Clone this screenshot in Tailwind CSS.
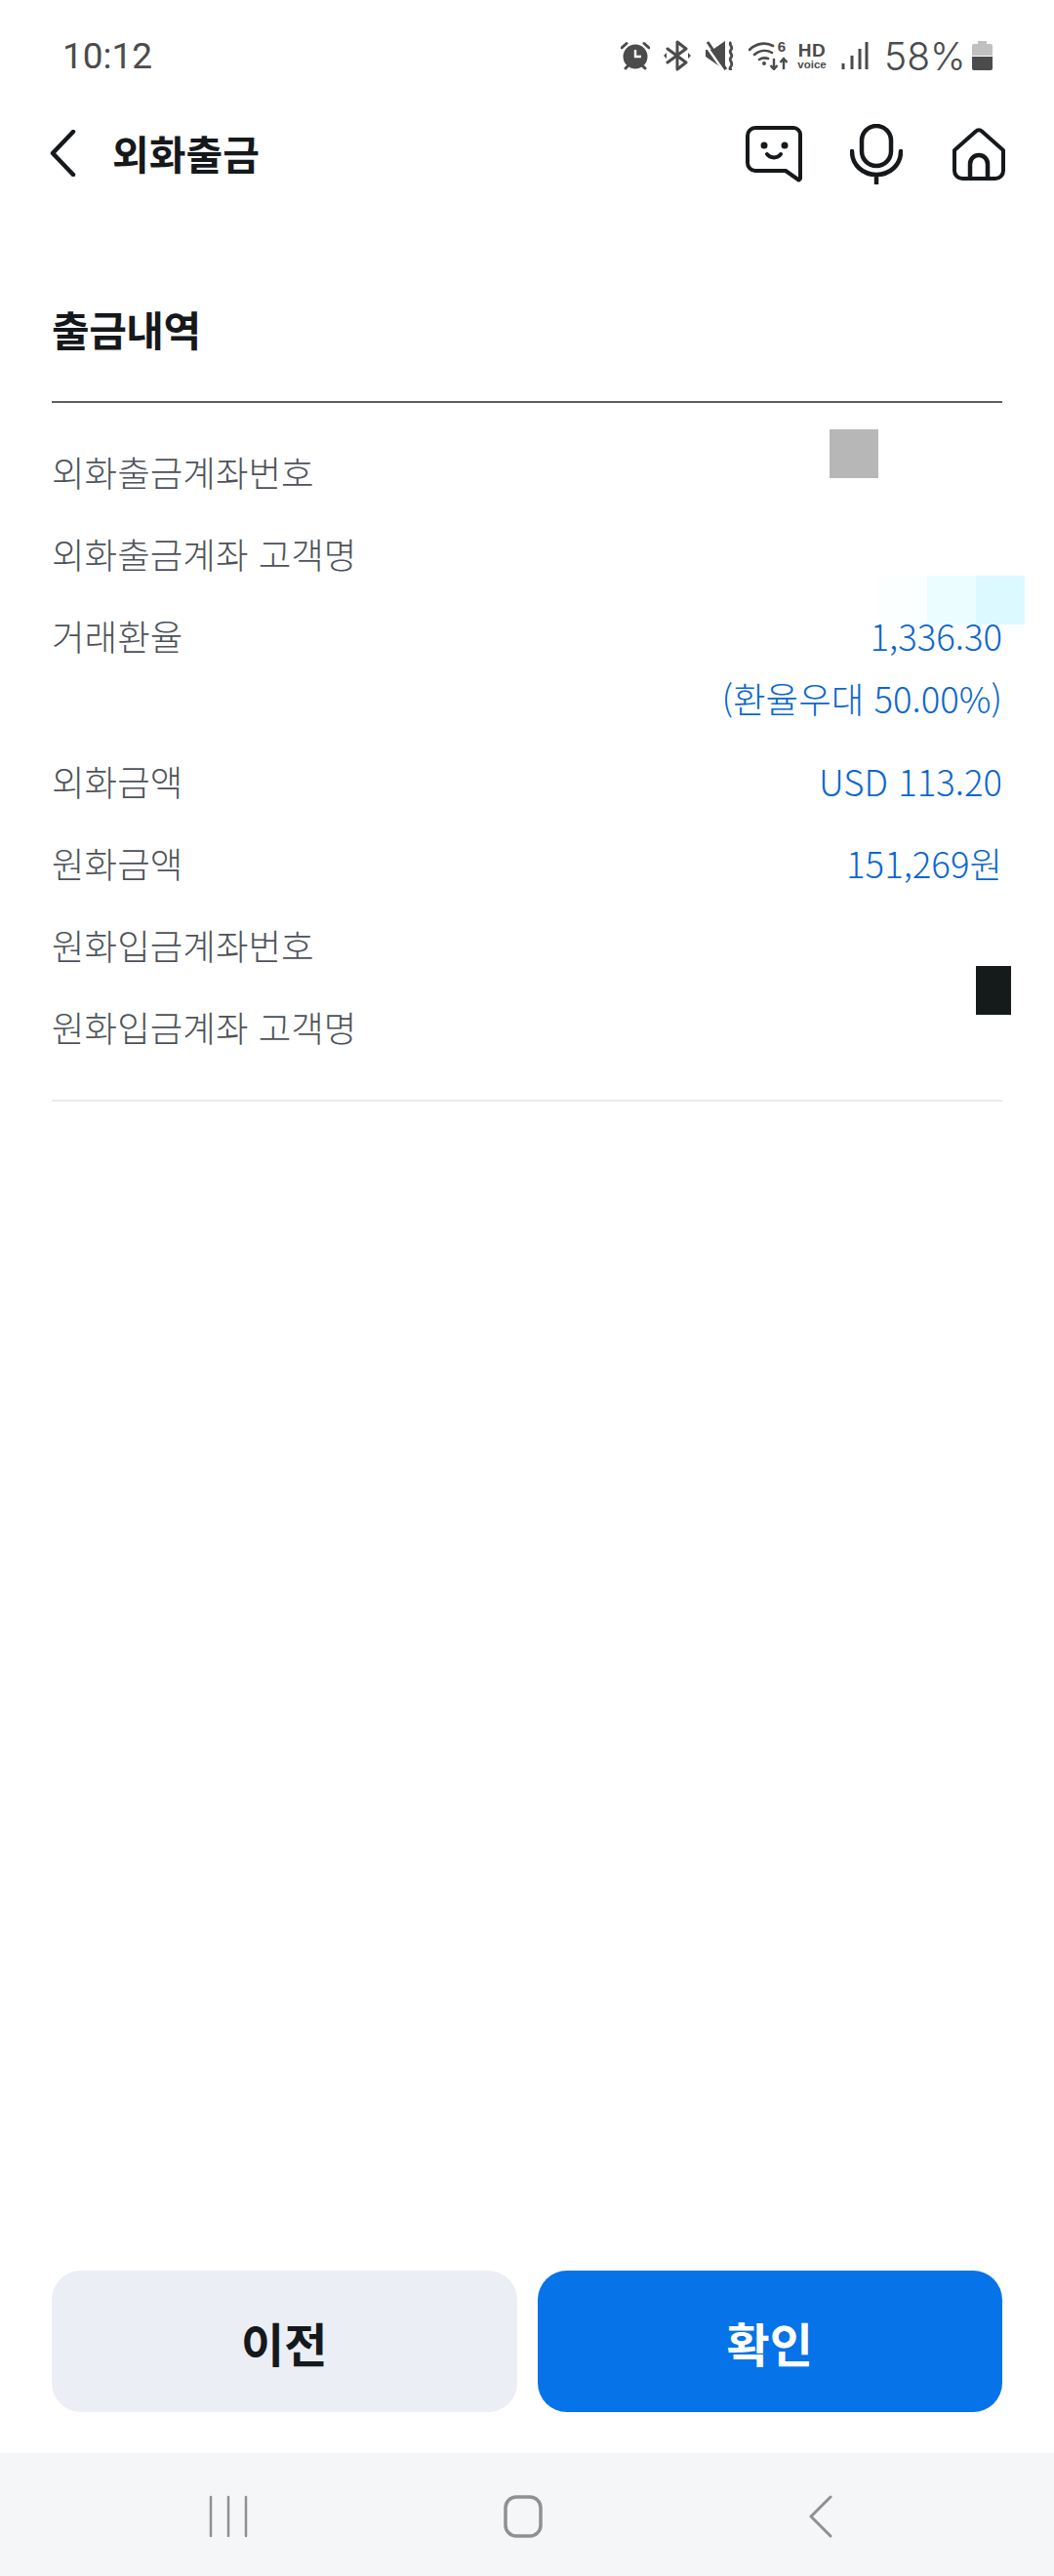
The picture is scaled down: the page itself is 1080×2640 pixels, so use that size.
<!doctype html>
<html lang="ko">
<head>
<meta charset="utf-8">
<script src="https://cdn.jsdelivr.net/npm/@tailwindcss/browser@4"></script>
</head>
<body class="bg-white">
<div class="relative w-[1080px] h-[2640px] flex flex-col bg-white overflow-hidden font-['Noto_Sans_CJK_KR','Noto_Sans',sans-serif]">

  <!-- status bar -->
  <div class="h-[114px] shrink-0 flex items-center justify-between pl-[64px] pr-[63px] text-[#4b4b4b]">
    <span class="font-['Roboto',sans-serif] text-[37px] leading-none">10:12</span>
    <div class="flex items-center h-[34px]">
      <svg class="w-[30px] h-[30px] mr-[14px]" viewBox="0 0 30 30"><circle cx="15" cy="16" r="12.500" fill="#4b4b4b"/><path d="M15 9v7h6" fill="none" stroke="#fff" stroke-width="2.4"/><path d="M1 7 6 2.500M29 7 24 2.500M5 28l2.500-2.500M25 28l-2.500-2.500" stroke="#4b4b4b" stroke-width="3" stroke-linecap="round"/></svg>
      <svg class="w-[28px] h-[32px] mr-[15px]" viewBox="0 0 28 32"><path d="M4 9 23 23 14 30V2l9 7L4 23" fill="none" stroke="#4b4b4b" stroke-width="3" stroke-linejoin="round" stroke-linecap="round"/><path d="M0 16l3-3v6zM28 16l-3-3v6z" fill="#4b4b4b"/></svg>
      <svg class="w-[30px] h-[30px] mr-[14px]" viewBox="0 0 30 30"><path d="M0 9h7L20 0v30L0 16z" fill="#4b4b4b"/><path d="M-1 3 18 30" stroke="#fff" stroke-width="2.400"/><path d="M2 1 21 29" stroke="#4b4b4b" stroke-width="3"/><path d="M26 1c-3 3 3 5 0 8s3 5 0 8 3 5 0 9 1 3 1 3" fill="none" stroke="#4b4b4b" stroke-width="2.800"/></svg>
      <div class="relative w-[41px] h-[30px] mr-[7px]">
        <svg class="absolute left-0 top-0 w-[41px] h-[30px]" viewBox="0 0 41 30"><path d="M1 9C8 2 18 1 25 5M6 14c6-5 13-5 18-2M11 19c3-2 6-2 9-1" fill="none" stroke="#4b4b4b" stroke-width="2.600" stroke-linecap="round"/><circle cx="16" cy="23" r="2" fill="#4b4b4b"/><path d="M26 18v11M22.500 25l3.500 4 3.500-4M36 29V18M32.500 22l3.500-4 3.500 4" fill="none" stroke="#4b4b4b" stroke-width="2.400"/></svg>
        <span class="absolute right-[3px] top-[-3px] font-['Liberation_Sans',sans-serif] font-bold text-[15px] leading-[18px]">6</span>
      </div>
      <div class="w-[34px] h-[30px] mr-[13px] flex flex-col items-center font-['Liberation_Sans',sans-serif] font-bold">
        <span class="text-[19px] leading-[19px] tracking-[0.5px]">HD</span>
        <span class="text-[11.500px] leading-[11px]">voice</span>
      </div>
      <svg class="w-[28px] h-[30px] mr-[16px]" viewBox="0 0 28 30"><path d="M2 23v6M11 15v14M19 8v21M26 1v28" stroke="#4b4b4b" stroke-width="3"/></svg>
      <span class="font-['Inter',sans-serif] font-light text-[39px] leading-none w-[84px] mr-[6px] whitespace-nowrap">58%</span>
      <svg class="w-[21px] h-[30px]" viewBox="0 0 21 30"><path d="M6 0h9v3h4a2 2 0 0 1 2 2v10H0V5a2 2 0 0 1 2-2h4z" fill="#c0c0c0"/><path d="M0 16h21v12a2 2 0 0 1-2 2H2a2 2 0 0 1-2-2z" fill="#4b4b4b"/></svg>
    </div>
  </div>

  <!-- header -->
  <div class="h-[90px] shrink-0 flex items-center pl-[50px] pr-[50px]">
    <svg class="w-[28px] h-[48px] mr-[37px] mb-[4px]" viewBox="0 0 28 48"><path d="M25 2 4 24l21 22" fill="none" stroke="#15191c" stroke-width="4.500" stroke-linecap="round" stroke-linejoin="round"/></svg>
    <h1 class="text-[41px] leading-none font-bold text-[#15191c] pb-[6px]">외화출금</h1>
    <div class="ml-auto flex items-center mb-[2px]">
      <svg class="w-[58px] h-[58px] mr-[49px]" viewBox="0 0 58 58"><path d="M10 2h39a7 7 0 0 1 7 7v45l-1.500 1.500L41 46H10a8 8 0 0 1-8-8V10a8 8 0 0 1 8-8z" fill="none" stroke="#15191c" stroke-width="4" stroke-linejoin="round"/><circle cx="19" cy="20" r="3.500" fill="#15191c"/><circle cx="40" cy="20" r="3.500" fill="#15191c"/><path d="M22 29c3 4.500 11 4.500 14 0" fill="none" stroke="#15191c" stroke-width="4" stroke-linecap="round"/></svg>
      <svg class="w-[54px] h-[62px] mr-[51px]" viewBox="0 0 54 62"><rect x="12" y="2" width="30" height="41" rx="15" fill="none" stroke="#15191c" stroke-width="4.500"/><path d="M2 28c0 14 11 24 25 24s25-10 25-24M27 52v9" fill="none" stroke="#15191c" stroke-width="4.500" stroke-linecap="round"/></svg>
      <svg class="w-[54px] h-[54px]" viewBox="0 0 54 54"><path d="M2 23 24 3.500a4 4 0 0 1 6 0L52 23v21a8 8 0 0 1-8 8H10a8 8 0 0 1-8-8z" fill="none" stroke="#15191c" stroke-width="4" stroke-linejoin="round"/><path d="M18 52V37a9 9 0 0 1 18 0v15" fill="none" stroke="#15191c" stroke-width="4.500"/></svg>
    </div>
  </div>

  <!-- section -->
  <section class="px-[53px] pt-[103px] flex-1">
    <h2 class="text-[42px] leading-[60px] font-bold tracking-[-0.5px] text-[#15191c] border-b-2 border-[#5b6066] h-[106px]">출금내역</h2>
    <dl class="pt-[29px] pb-[32px] border-b-2 border-[#ebecee] text-[36.500px] font-light leading-[84px] text-[#4d5259]">
      <div class="flex justify-between h-[84px]"><dt>외화출금계좌번호</dt><dd></dd></div>
      <div class="flex justify-between h-[84px]"><dt>외화출금계좌 고객명</dt><dd></dd></div>
      <div class="flex justify-between h-[149px]"><dt>거래환율</dt><dd class="text-right text-[#0b66d0] leading-[64px] pt-[10px]"><div>1,336.30</div><div>(환율우대 50.00%)</div></dd></div>
      <div class="flex justify-between h-[84px]"><dt>외화금액</dt><dd class="text-[#0b66d0]">USD 113.20</dd></div>
      <div class="flex justify-between h-[84px]"><dt>원화금액</dt><dd class="text-[#0b66d0]">151,269원</dd></div>
      <div class="flex justify-between h-[84px]"><dt>원화입금계좌번호</dt><dd></dd></div>
      <div class="flex justify-between h-[84px]"><dt>원화입금계좌 고객명</dt><dd></dd></div>
    </dl>
  </section>

  <!-- buttons -->
  <div class="shrink-0 flex gap-[21px] px-[53px] pb-[42px]">
    <button class="w-[478px] h-[145px] rounded-[30px] bg-[#ebeef5] text-[#15191c] text-[48px] font-bold">이전</button>
    <button class="w-[478px] h-[145px] rounded-[30px] bg-[#0673e8] text-white text-[48px] font-bold">확인</button>
  </div>

  <!-- navigation bar -->
  <div class="h-[126px] shrink-0 bg-[#f5f6f8] flex items-center pl-[214px] pt-[4px]">
    <svg class="w-[40px] h-[44px] mr-[262px]" viewBox="0 0 40 44"><path d="M2 2v40M20 2v40M38 2v40" stroke="#8f9092" stroke-width="2.500" stroke-linecap="round"/></svg>
    <svg class="w-[40px] h-[44px] mr-[272px]" viewBox="0 0 40 44"><rect x="2" y="2" width="36" height="40" rx="11" fill="none" stroke="#8f9092" stroke-width="3.500"/></svg>
    <svg class="w-[26px] h-[44px]" viewBox="0 0 26 44"><path d="M23 2 3 22l20 20" fill="none" stroke="#8f9092" stroke-width="3" stroke-linecap="round" stroke-linejoin="round"/></svg>
  </div>

  <!-- mosaic censor blocks over the values -->
  <div class="absolute left-[850px] top-[440px] w-[50px] h-[50px] bg-[#b7b7b8]"></div>
  <div class="absolute left-[900px] top-[590px] w-[50px] h-[50px] bg-[#fcffff]"></div>
  <div class="absolute left-[950px] top-[590px] w-[50px] h-[50px] bg-[#ebfdff]"></div>
  <div class="absolute left-[1000px] top-[590px] w-[50px] h-[50px] bg-[#dbf9ff]"></div>
  <div class="absolute left-[1000px] top-[990px] w-[36px] h-[50px] bg-[#151a1b]"></div>
  <div class="absolute left-[1025px] top-[695px] w-[8px] h-[45px] bg-white/80"></div>
  <div class="absolute left-[1025px] top-[785px] w-[8px] h-[35px] bg-white/80"></div>
</div>
</body>
</html>
